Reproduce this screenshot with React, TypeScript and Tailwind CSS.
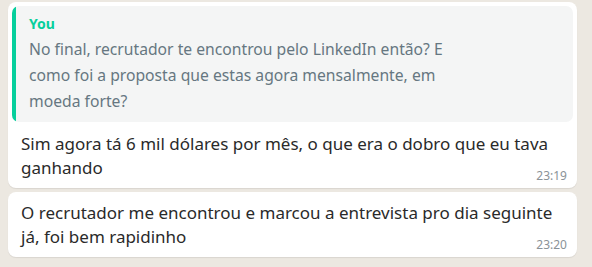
export default function App() {
  return (
    <div
      className="w-[592px] h-[267px] bg-[#ece8e1] pt-[2px] pl-[8px] overflow-hidden"
      style={{ fontFamily: '"Noto Sans", "Open Sans", sans-serif' }}
    >
      <div className="w-[569px] flex flex-col gap-[4px]">
        <div className="bg-white rounded-[8px] shadow-[0_1px_1px_rgba(0,0,0,0.08)] px-[4px] pt-[4px] pb-[5px]">
          <div className="flex rounded-[7px] bg-[#f4f5f5] overflow-hidden h-[116px]">
            <div className="w-[4px] bg-[#06cf9c] shrink-0" />
            <div className="pl-[13px] pt-[8px] pr-4">
              <div className="text-[#06cf9c] text-[14px] font-bold leading-[20px]">You</div>
              <p className="mt-[2px] text-[#667781] text-[15.7px] leading-[26px]">
                No final, recrutador te encontrou pelo LinkedIn então? E
                <br />
                como foi a proposta que estas agora mensalmente, em
                <br />
                moeda forte?
              </p>
            </div>
          </div>
          <div className="pl-[9px] pr-[6px] pt-[10px]">
            <p className="text-[#2a2a2a] text-[17px] leading-[24px]">
              Sim agora tá 6 mil dólares por mês, o que era o dobro que eu tava
              <br />
              ganhando
            </p>
            <div className="flex justify-end -mt-[11px] text-[12px] leading-[14px] text-[#8a9297]">23:19</div>
          </div>
        </div>
        <div className="bg-white rounded-[8px] shadow-[0_1px_1px_rgba(0,0,0,0.08)] pl-[13px] pr-[10px] pt-[9px] pb-[5px]">
          <p className="text-[#2a2a2a] text-[17px] leading-[24px]">
            O recrutador me encontrou e marcou a entrevista pro dia seguinte
            <br />
            já, foi bem rapidinho
          </p>
          <div className="flex justify-end -mt-[11px] text-[12px] leading-[14px] text-[#8a9297]">23:20</div>
        </div>
      </div>
    </div>
  );
}
